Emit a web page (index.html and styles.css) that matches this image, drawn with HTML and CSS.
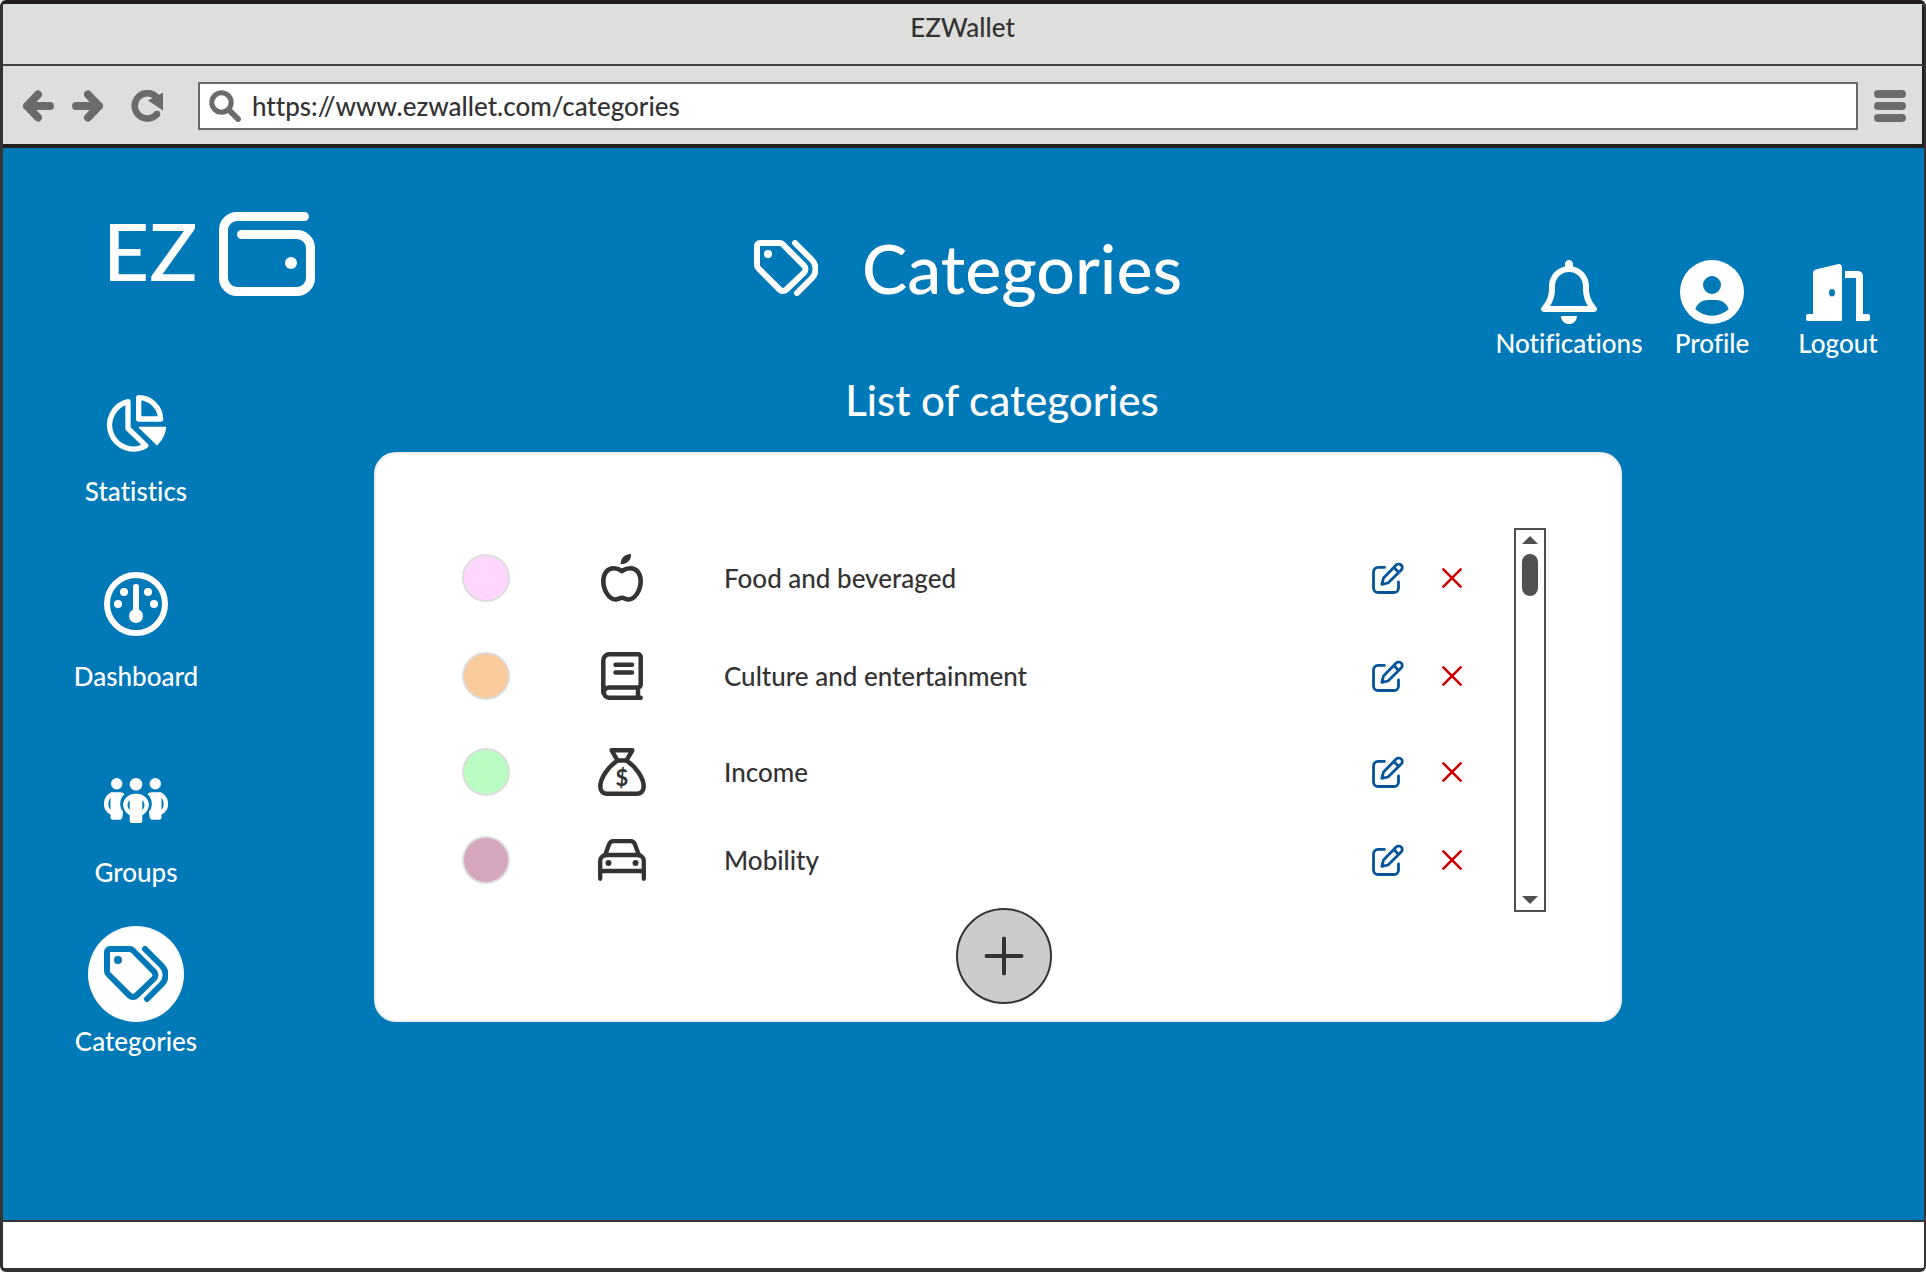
FILE: index.html
```html
<!DOCTYPE html>
<html lang="en">
<head>
<meta charset="utf-8">
<meta name="viewport" content="width=device-width, initial-scale=1">
<title>EZWallet</title>
<link rel="stylesheet" href="styles.css">
</head>
<body>
<svg class="sprite" aria-hidden="true">
  <symbol id="tags" viewBox="0 0 64 56">
    <g fill="none" stroke="currentColor" stroke-width="6" stroke-linecap="round" stroke-linejoin="round">
      <path d="M6 3H25.5a5 5 0 0 1 3.5 1.5L50 25.6a5 5 0 0 1 0 7L32.5 49.500a5 5 0 0 1-7 0L4.500 28.500A5 5 0 0 1 3 25V6a3 3 0 0 1 3-3z"/>
      <path d="M41 3L58 20a13 13 0 0 1 0 18L43 53"/>
    </g>
    <circle cx="14" cy="14" r="4" fill="currentColor"/>
  </symbol>
  <symbol id="edit" viewBox="0 0 32 32">
    <g fill="none" stroke="currentColor" stroke-width="2.8" stroke-linecap="round" stroke-linejoin="round">
      <path d="M12.500 5.400H6A4.500 4.500 0 0 0 1.500 9.900V26A4.500 4.500 0 0 0 6 30.500H22A4.500 4.500 0 0 0 26.500 26V20"/>
      <path d="M9.800 22.300L11.500 16L24.200 3.100a3.500 3.500 0 0 1 5 5L16 21zM21.800 5.500l5 5"/>
    </g>
  </symbol>
  <symbol id="cross" viewBox="0 0 20 20">
    <path d="M1.400 1.400L18.600 18.600M18.600 1.400L1.400 18.600" fill="none" stroke="currentColor" stroke-width="2.600" stroke-linecap="round"/>
  </symbol>
</svg>

<div class="window">
  <div class="titlebar">EZWallet</div>
  <div class="toolbar">
    <button class="tool" type="button" aria-label="Back">
      <svg width="32" height="32" viewBox="0 0 32 32"><path d="M16 4.500L5 16L16 27.500M5 16H28" fill="none" stroke="currentColor" stroke-width="8" stroke-linecap="round" stroke-linejoin="round"/></svg>
    </button>
    <button class="tool" type="button" aria-label="Forward">
      <svg width="32" height="32" viewBox="0 0 32 32"><path d="M16 4.500L27 16L16 27.500M27 16H4" fill="none" stroke="currentColor" stroke-width="8" stroke-linecap="round" stroke-linejoin="round"/></svg>
    </button>
    <button class="tool tool-reload" type="button" aria-label="Reload">
      <svg width="32" height="32" viewBox="0 0 32 32"><path d="M25.500 7A12.700 12.700 0 1 0 26.500 23.500" fill="none" stroke="currentColor" stroke-width="6.500"/><circle cx="26" cy="24" r="3.300" fill="currentColor"/><path d="M32 2.500V20.500L17 10.500Z" fill="currentColor"/></svg>
    </button>
    <label class="address">
      <svg width="32" height="32" viewBox="0 0 32 32" aria-hidden="true"><circle cx="12.500" cy="12.500" r="9.700" fill="none" stroke="currentColor" stroke-width="5"/><path d="M20 20L29 29" stroke="currentColor" stroke-width="6" stroke-linecap="round"/></svg>
      <input type="text" value="https://www.ezwallet.com/categories" aria-label="Address">
    </label>
    <button class="tool" type="button" aria-label="Menu">
      <svg width="32" height="32" viewBox="0 0 32 32" fill="currentColor"><rect width="32" height="8" rx="4"/><rect y="12" width="32" height="8" rx="4"/><rect y="24" width="32" height="8" rx="4"/></svg>
    </button>
  </div>

  <div class="app">
    <header class="header">
      <a class="logo" href="#">
        <span class="logo-text">EZ</span>
        <svg width="96" height="84" viewBox="0 0 96 84" aria-hidden="true"><path d="M85.500 4.500H18A13.500 13.500 0 0 0 4.500 18V66A13.500 13.500 0 0 0 18 79.500H78A13.500 13.500 0 0 0 91.500 66V36A13.500 13.500 0 0 0 78 22.500H22.500" fill="none" stroke="currentColor" stroke-width="9" stroke-linecap="round"/><circle cx="72" cy="51" r="6" fill="currentColor"/></svg>
      </a>
      <h1 class="title">
        <svg width="64" height="56" aria-hidden="true"><use href="#tags"/></svg>
        Categories
      </h1>
      <nav class="actions" aria-label="Account">
        <a class="action action-notifications" href="#">
          <svg width="56" height="64" viewBox="0 0 448 512" fill="currentColor" aria-hidden="true"><path d="M224 0c-17.700 0-32 14.300-32 32V51.200C119 66 64 130.600 64 208v25.400c0 45.400-15.500 89.500-43.800 124.900L5.300 377c-5.800 7.200-6.900 17.100-2.900 25.400S14.800 416 24 416H424c9.200 0 17.600-5.300 21.600-13.600s2.900-18.200-2.900-25.400l-14.900-18.600C399.500 322.900 384 278.800 384 233.400V208c0-77.400-55-142-128-156.800V32c0-17.700-14.300-32-32-32zm0 96c61.900 0 112 50.100 112 112v25.400c0 47.900 13.900 94.600 39.700 134.600H72.300C98.100 328 112 281.300 112 233.400V208c0-61.900 50.100-112 112-112zm64 352H160c0 17 6.700 33.300 18.700 45.300s28.300 18.700 45.300 18.700s33.300-6.700 45.300-18.700s18.700-28.300 18.700-45.300z"/></svg>
          Notifications
        </a>
        <a class="action action-profile" href="#">
          <svg width="64" height="64" viewBox="0 0 64 64" fill="currentColor" aria-hidden="true"><path fill-rule="evenodd" d="M32 0a32 32 0 1 1 0 64a32 32 0 1 1 0-64zM32 16a9 9 0 1 0 0 18a9 9 0 1 0 0-18zM15.300 49.200Q32 62.500 48.700 49.200C46.500 43 41.500 40 36 40H28C22.500 40 17.500 43 15.300 49.200z"/></svg>
          Profile
        </a>
        <a class="action action-logout" href="#">
          <svg width="64" height="64" viewBox="0 -4 64 64" fill="currentColor" aria-hidden="true"><path fill-rule="evenodd" d="M7 50V9Q7 6.200 9.700 5.400L31.500 .2Q36 -.5 36 4V57H2Q0 57 0 55V52Q0 50 2 50zM26 25a3 3.700 0 1 0 0 7.400a3 3.700 0 1 0 0-7.400z"/><path d="M39 7H51.500Q57 7 57 12.500V50H62Q64 50 64 52V55Q64 57 62 57H50V14H39z"/></svg>
          Logout
        </a>
      </nav>
    </header>

    <div class="body">
      <nav class="sidebar" aria-label="Main">
        <a class="nav-item" href="#">
          <span class="nav-icon">
            <svg width="61" height="58" viewBox="0 0 61 58" aria-hidden="true"><g fill="none" stroke="currentColor" stroke-width="5.300" stroke-linejoin="round"><path d="M22 6.600V33.500L39.800 50.600A24 24 0 1 1 22 6.600z"/><path d="M32.700 2.700A22 22 0 0 1 54.600 24H32.700z"/></g><path d="M33.500 32.500H59.500A28 28 0 0 1 51 49.500z" fill="currentColor" stroke="currentColor" stroke-width="1.500" stroke-linejoin="round"/></svg>
          </span>
          Statistics
        </a>
        <a class="nav-item nav-item-spaced" href="#">
          <span class="nav-icon">
            <svg width="64" height="64" viewBox="0 0 64 64" fill="currentColor" aria-hidden="true"><circle cx="32" cy="32" r="29" fill="none" stroke="currentColor" stroke-width="6"/><circle cx="14" cy="32" r="4"/><circle cx="20" cy="20" r="4"/><circle cx="44" cy="20" r="4"/><circle cx="50" cy="32" r="4"/><circle cx="32" cy="44" r="7"/><path d="M32 15V42" stroke="currentColor" stroke-width="6" stroke-linecap="round"/></svg>
          </span>
          Dashboard
        </a>
        <a class="nav-item nav-item-spaced" href="#">
          <span class="nav-icon">
            <svg width="64" height="45" viewBox="0 0 64 45" fill="currentColor" aria-hidden="true">
              <g id="side-person"><circle cx="12.700" cy="5.700" r="5.700"/><path d="M8 14.300H16.500Q19 14.500 20.500 16Q15.500 21 16.300 28Q17 31.500 19 33.500L18.500 39Q18 41.700 16 41.700H9Q6.500 41.700 6.500 39V14.500z"/><path d="M9.500 16.600C.3 17.500-.2 32 7.500 34.300" fill="none" stroke="currentColor" stroke-width="4.500"/></g>
              <use href="#side-person" transform="matrix(-1 0 0 1 64 0)"/>
              <circle cx="32" cy="6.300" r="6.300"/><ellipse cx="32" cy="27" rx="10.700" ry="9.200" fill="none" stroke="currentColor" stroke-width="4.300"/><rect x="25.700" y="16" width="12.600" height="29" rx="2.500"/>
            </svg>
          </span>
          Groups
        </a>
        <a class="nav-item" href="#" aria-current="page">
          <span class="nav-icon nav-icon-active">
            <svg width="64" height="56" aria-hidden="true"><use href="#tags"/></svg>
          </span>
          Categories
        </a>
      </nav>

      <main class="main">
        <h2 class="subtitle">List of categories</h2>
        <section class="card">
          <div class="scroll-area">
            <ul class="list">
              <li class="row">
                <span class="swatch swatch-pink"></span>
                <svg class="row-icon" width="42" height="48" viewBox="0 0 42 48" aria-hidden="true"><path d="M21 17C18 15 15 14.300 12.500 14.300C6 14.300 2.300 20 2.300 27C2.300 36 8 45.500 14.500 45.500C17.500 45.500 18.500 43.800 21 43.800C23.500 43.800 24.500 45.500 27.500 45.500C34 45.500 39.700 36 39.700 27C39.700 20 36 14.300 29.500 14.300C27 14.300 24 15 21 17z" fill="none" stroke="currentColor" stroke-width="4.600"/><path d="M30 0C24 0 19.500 4 19.700 10.300C26 10.500 30.500 6 30 0z" fill="currentColor"/></svg>
                <span class="name">Food and beveraged</span>
                <button class="edit" type="button" aria-label="Edit Food and beveraged"><svg width="32" height="32"><use href="#edit"/></svg></button>
                <button class="delete" type="button" aria-label="Delete Food and beveraged"><svg width="20" height="20"><use href="#cross"/></svg></button>
              </li>
              <li class="row">
                <span class="swatch swatch-orange"></span>
                <svg class="row-icon" width="42" height="48" viewBox="0 0 42 48" fill="none" stroke="currentColor" stroke-width="4.500" stroke-linecap="round" aria-hidden="true"><path d="M8 35.500H37A2.700 2.700 0 0 0 39.700 32.800V5A2.700 2.700 0 0 0 37 2.300H8.300A6 6 0 0 0 2.300 8.300V40.500M8 35.500A5 5 0 0 0 8 45.700H39.700M37 36.500V45M14.500 12.700H31M14.500 20.400H31"/></svg>
                <span class="name">Culture and entertainment</span>
                <button class="edit" type="button" aria-label="Edit Culture and entertainment"><svg width="32" height="32"><use href="#edit"/></svg></button>
                <button class="delete" type="button" aria-label="Delete Culture and entertainment"><svg width="20" height="20"><use href="#cross"/></svg></button>
              </li>
              <li class="row">
                <span class="swatch swatch-green"></span>
                <svg class="row-icon" width="48" height="48" viewBox="0 0 48 48" aria-hidden="true"><g fill="none" stroke="currentColor" stroke-width="4.500" stroke-linejoin="round"><path d="M13.700 2.300H34.300L28.500 12.500H19.500z"/><path d="M19.500 12.500C10 19 2.300 30 2.300 38.500C2.300 43 5 45.700 9.500 45.700H38.500C43 45.700 45.700 43 45.700 38.500C45.700 30 38 19 28.500 12.500"/></g><text class="dollar" x="24" y="38" text-anchor="middle">$</text></svg>
                <span class="name">Income</span>
                <button class="edit" type="button" aria-label="Edit Income"><svg width="32" height="32"><use href="#edit"/></svg></button>
                <button class="delete" type="button" aria-label="Delete Income"><svg width="20" height="20"><use href="#cross"/></svg></button>
              </li>
              <li class="row">
                <span class="swatch swatch-mauve"></span>
                <svg class="row-icon" width="48" height="42" viewBox="0 0 48 42" aria-hidden="true"><path d="M7 16.500L11 5.500A5 5 0 0 1 15.500 2.200H32.500A5 5 0 0 1 37 5.500L41 16.500M2.200 39.800V22A6 6 0 0 1 8.200 16H39.800A6 6 0 0 1 45.800 22V39.800M2.200 32H45.800" fill="none" stroke="currentColor" stroke-width="4.300" stroke-linecap="round"/><circle cx="10.500" cy="24" r="3" fill="currentColor"/><circle cx="37.500" cy="24" r="3" fill="currentColor"/></svg>
                <span class="name">Mobility</span>
                <button class="edit" type="button" aria-label="Edit Mobility"><svg width="32" height="32"><use href="#edit"/></svg></button>
                <button class="delete" type="button" aria-label="Delete Mobility"><svg width="20" height="20"><use href="#cross"/></svg></button>
              </li>
            </ul>
            <div class="scrollbar">
              <button type="button" aria-label="Scroll up"><svg width="16" height="8"><path d="M0 8L8 0L16 8z" fill="currentColor"/></svg></button>
              <div class="thumb"></div>
              <button class="scroll-down" type="button" aria-label="Scroll down"><svg width="16" height="8"><path d="M0 0L8 8L16 0z" fill="currentColor"/></svg></button>
            </div>
          </div>
          <button class="add" type="button" aria-label="Add category">
            <svg width="40" height="40" viewBox="0 0 40 40"><path d="M20 2.500V37.500M2.500 20H37.500" stroke="currentColor" stroke-width="4" stroke-linecap="round"/></svg>
          </button>
        </section>
      </main>
    </div>
  </div>
  <footer class="statusbar"></footer>
</div>
</body>
</html>
```
FILE: styles.css
```css
* { box-sizing: border-box; }

body {
  margin: 0;
  background: #fff;
  color: #333;
  font: 500 26px/32px Lato, sans-serif;
  font-variant-ligatures: none;
}

button {
  display: flex;
  padding: 0;
  border: 0;
  background: none;
  color: inherit;
  font: inherit;
  cursor: pointer;
}

a { color: inherit; text-decoration: none; }
svg { display: block; flex: none; }
.sprite { display: none; }

.window {
  display: flex;
  flex-direction: column;
  min-height: 100vh;
  overflow: hidden;
  border: solid #333;
  border-width: 4px 2px 4px 3px;
  border-top-color: #231f20;
  border-radius: 6px;
}

/* Browser chrome */
.titlebar {
  height: 62px;
  padding-top: 7px;
  border-right: 2px solid #231f20;
  border-bottom: 2px solid #444;
  background: #dededc;
  text-align: center;
}

.toolbar {
  display: flex;
  align-items: center;
  height: 82px;
  padding: 2px 16px 0 19px;
  border-right: 2px solid #231f20;
  border-bottom: 4px solid #231f20;
  background: #dededc;
  color: #6b6b6b;
}

.tool + .tool { margin-left: 18px; }
.toolbar .tool-reload { margin-left: 27px; }

.address {
  display: flex;
  flex: 1;
  align-items: center;
  gap: 11px;
  height: 48px;
  margin: 0 16px 0 35px;
  padding: 0 9px;
  border: 2px solid #6b6b6b;
  background: #fff;
}

.address input {
  flex: 1;
  min-width: 0;
  padding: 0;
  border: 0;
  outline: 0;
  background: none;
  color: #333;
  font: inherit;
}

/* Application */
.app { flex: 1; background: #0079b9; color: #fff; }

.statusbar {
  height: 48px;
  border-top: 2px solid #333;
  background: #fff;
}

.header {
  display: grid;
  grid-template-columns: 1fr auto 1fr;
  align-items: start;
  min-height: 228px;
  padding: 64px 31px 0 100px;
}

.logo { display: flex; gap: 22px; }
.logo-text { font-size: 80px; line-height: 76px; }

.title {
  display: flex;
  align-items: center;
  gap: 44px;
  margin: 16px 60px 0 0;
  font-size: 68px;
  font-weight: 500;
  line-height: 80px;
}

.actions { display: flex; justify-content: flex-end; padding-top: 48px; }

.action {
  display: flex;
  flex-direction: column;
  align-items: center;
  gap: 3px;
}

.action-notifications { width: 144px; }
.action-profile { width: 142px; }
.action-logout { width: 110px; }

.body {
  display: grid;
  grid-template-columns: 371px minmax(0, 1fr);
  padding-right: 302px;
}

.sidebar {
  display: grid;
  grid-template-rows: 180px 196px 174px auto;
  justify-items: center;
  width: 132px;
  margin-left: 67px;
}

.nav-item {
  display: flex;
  flex-direction: column;
  align-items: center;
  gap: 3px;
}

.nav-item-spaced { gap: 8px; }

.nav-icon {
  display: grid;
  place-items: center;
  width: 96px;
  height: 96px;
  border-radius: 50%;
}

.nav-icon-active { background: #fff; color: #0079b9; }

.subtitle {
  margin: 0 0 28px 8px;
  font-size: 42px;
  font-weight: 500;
  line-height: 48px;
  text-align: center;
}

.card {
  padding: 74px 74px 16px 86px;
  border: 2px solid #eee;
  border-radius: 22px;
  background: #fff;
  color: #333;
}

.scroll-area { display: flex; gap: 52px; }

.list {
  display: grid;
  flex: 1;
  grid-template-rows: 98px 98px 94px 82px;
  margin: 0;
  padding: 1px 0 0;
  list-style: none;
}

.row {
  display: grid;
  grid-template-columns: 112px 96px 1fr 32px 58px;
  align-items: center;
}

.row-icon { justify-self: center; }
.name { padding-left: 54px; }
.edit { color: #055499; }
.delete { justify-self: end; color: #c00; }

.swatch {
  width: 48px;
  height: 48px;
  border: 2px solid #ddd;
  border-radius: 50%;
}

.swatch-pink { background: #ffd6ff; }
.swatch-orange { background: #f8ca9c; }
.swatch-green { background: #b9fbc0; }
.swatch-mauve { background: #d5a6bd; }

.dollar { fill: #333; font-size: 22px; font-weight: 700; }

.scrollbar {
  display: flex;
  flex-direction: column;
  align-items: center;
  gap: 10px;
  width: 32px;
  height: 384px;
  padding: 6px 0;
  border: 2px solid #505050;
  color: #505050;
}

.thumb { width: 16px; height: 42px; border-radius: 8px; background: #505050; }
.scroll-down { margin-top: auto; }

.add {
  align-items: center;
  justify-content: center;
  width: 96px;
  height: 96px;
  margin: -4px auto 0;
  border: 2px solid #333;
  border-radius: 50%;
  background: #ccc;
}
```
